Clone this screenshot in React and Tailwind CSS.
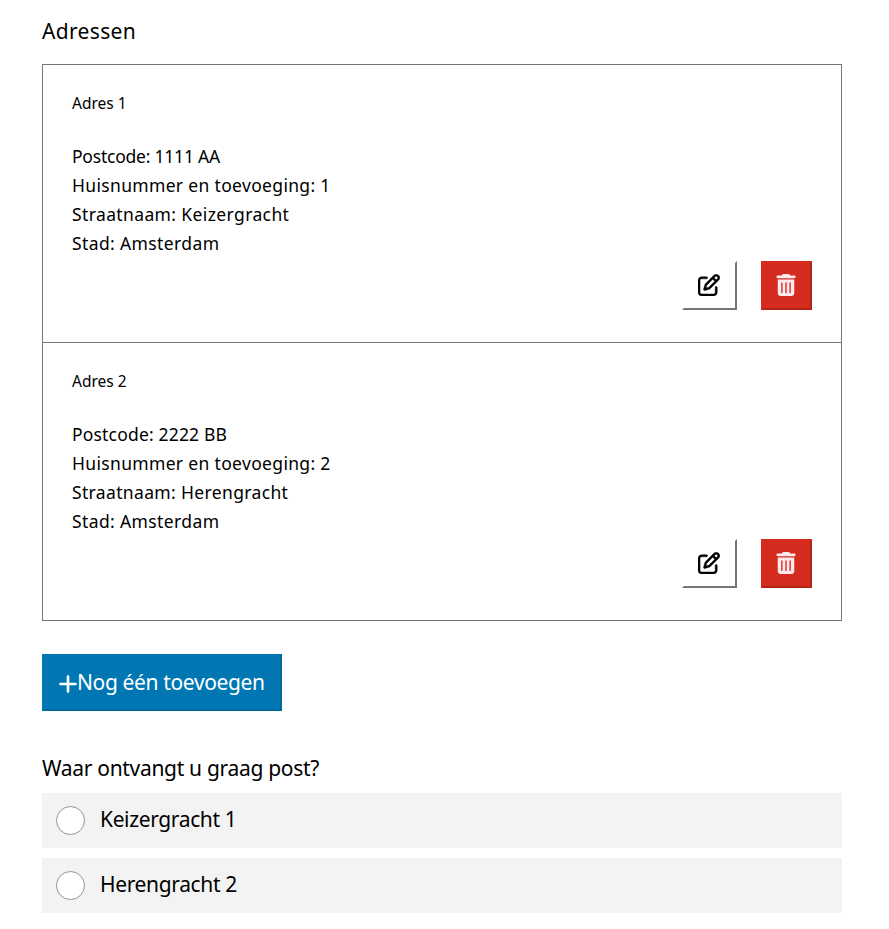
import { FaRegPenToSquare, FaTrashCan } from "react-icons/fa6";

const addresses = [
  {
    title: "Adres 1",
    lines: [
      ["Postcode: 1111 AA", "tracking-[-0.22px]"],
      ["Huisnummer en toevoeging: 1", "tracking-[0.33px]"],
      ["Straatnaam: Keizergracht", "tracking-[0.38px]"],
      ["Stad: Amsterdam", "tracking-[0.38px]"],
    ],
  },
  {
    title: "Adres 2",
    lines: [
      ["Postcode: 2222 BB", "tracking-[0.18px]"],
      ["Huisnummer en toevoeging: 2", "tracking-[0.33px]"],
      ["Straatnaam: Herengracht", "tracking-[0.35px]"],
      ["Stad: Amsterdam", "tracking-[0.38px]"],
    ],
  },
];

function Address({ title, lines }) {
  return (
    <section className="h-[278px] border-b border-[#767676] px-[29px] pt-[26px]">
      <h2 className="text-[15.5px] leading-6">{title}</h2>
      <div className="mt-[27px] text-[17.5px] leading-[29px]">
        {lines.map(([line, tracking]) => (
          <p key={line} className={`w-fit whitespace-nowrap ${tracking}`}>{line}</p>
        ))}
      </div>
      <div className="mt-[3px] flex justify-end gap-6">
        <button aria-label="Bewerken" className="flex h-[49px] w-[55px] items-center justify-center border-2 border-t-white border-l-white border-r-[#767676] border-b-[#767676] bg-white pr-[2px] pb-[2px]">
          <FaRegPenToSquare size={22} stroke="currentColor" strokeWidth={10} />
        </button>
        <button aria-label="Verwijderen" className="flex h-[49px] w-[51px] items-center justify-center border-2 border-t-[#d52b1e] border-l-[#d52b1e] border-r-[#b0241a] border-b-[#b0241a] bg-[#d52b1e] pr-[1px] pb-[2px] text-[#ffe9ed]">
          <FaTrashCan size={22} />
        </button>
      </div>
    </section>
  );
}

export default function App() {
  return (
    <main className="h-[929px] w-[889px] overflow-hidden bg-white px-[42px] pt-[15px] font-['Noto_Sans',sans-serif] text-[21px] text-black">
      <div className="w-[800px]">
        <h1 className="leading-8 tracking-[0.33px]">Adressen</h1>
        <div className="mt-[17px] border border-b-0 border-[#767676]">
          {addresses.map((address) => (
            <Address key={address.title} {...address} />
          ))}
        </div>
        <button className="mt-[33px] flex h-[57px] w-[240px] items-center whitespace-nowrap border-2 border-t-[#0077b3] border-l-[#0077b3] border-r-[#006a9f] border-b-[#006a9f] bg-[#0077b3] pl-[15px] text-white">
          <svg className="mt-[2px] size-[18px]" viewBox="0 0 18 18" fill="none" stroke="currentColor" strokeWidth="2.7" strokeLinecap="round">
            <path d="M9 1.5v15M1.5 9h15" />
          </svg>
          <span className="tracking-[-0.36px]">Nog één toevoegen</span>
        </button>
        <fieldset className="mt-[41px]">
          <legend className="leading-8 tracking-[-0.31px]">Waar ontvangt u graag post?</legend>
          <div className="mt-[9px] flex flex-col gap-[10px]">
            {["Keizergracht 1", "Herengracht 2"].map((option) => (
              <label key={option} className="flex h-[55px] items-center bg-[#f3f3f3] pl-[14px]">
                <input type="radio" name="post" className="size-[29px] appearance-none rounded-full border border-[#949494] bg-white" />
                <span className="mb-[2px] ml-[15px] whitespace-nowrap tracking-[-0.36px]">{option}</span>
              </label>
            ))}
          </div>
        </fieldset>
      </div>
    </main>
  );
}
